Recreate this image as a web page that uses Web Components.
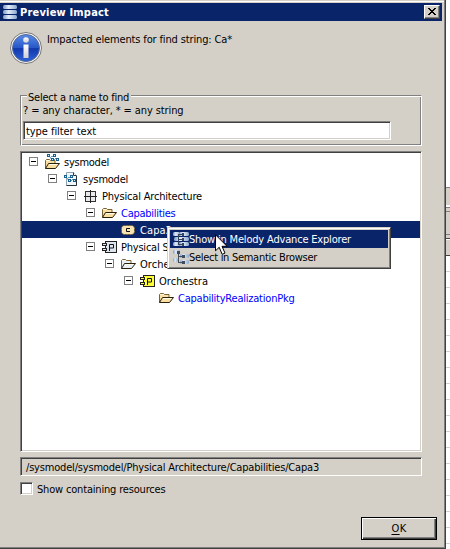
<!DOCTYPE html>
<html lang="en"><head><meta charset="utf-8"><title>Preview Impact</title>
<style>
html,body{margin:0;width:450px;height:549px;overflow:hidden;background:#fff}
body{font:11px/16px "DejaVu Sans Condensed","DejaVu Sans","Noto Sans",sans-serif;color:#000}
</style></head><body>
<preview-window></preview-window>
<script>
const define=(name,html,init)=>customElements.define(name,class extends HTMLElement{
  connectedCallback(){
    if(this.shadowRoot)return;
    const t=document.createElement('template');
    t.innerHTML=typeof html==='function'?html(this):html;
    this.attachShadow({mode:'open'}).append(t.content.cloneNode(true));
    if(init)init(this);
  }
});

const folder=fill=>`<path d="M1.500 12.500V4.500l1-1h3l1 1h4.500v3" fill="${fill}" stroke="#7b6230"/><path d="M1.500 12.500L4.500 7.500h11L11.500 12.500z" fill="${fill}" stroke="#2a1f08"/><path d="M2.500 4.500h3M5 8.500h8" stroke="#fffbe8"/>`;
const nodes=`<path d="M5 3l2 3M6 2.500h3M9 6l2-2" stroke="#5f97bb"/><g fill="#d3eefb" stroke="#17608f"><rect x="2.500" y=".5" width="2" height="2"/><rect x="8.500" y=".5" width="2" height="2"/><rect x="6.500" y="4.500" width="2" height="2"/><rect x="11.500" y="4.500" width="2" height="2"/></g>`;
const part=fill=>`<rect x="4.500" y="2.500" width="11" height="11" fill="${fill}" stroke="#222"/><path d="M8.500 12V5.500h4v3.500h-4" fill="none" stroke="#111"/><g fill="${fill}" stroke="#222"><rect x="1.500" y="4.500" width="4" height="2"/><rect x="1.500" y="9.500" width="4" height="2"/></g>`;
const bar=(x,y,w)=>`<rect x="${x}" y="${y}" width="${w}" height="4" rx="1.500" fill="url(#g)"/>`;
const grad=`<defs><linearGradient id="g"><stop stop-color="#7d9ac6"/><stop offset=".4" stop-color="#e4edf8"/><stop offset="1" stop-color="#8ba7cf"/></linearGradient></defs>`;
const icons={
  project:`<g transform="translate(0 2)">${folder('#f7dfa0')}</g><g transform="translate(1 0)">${nodes}</g>`,
  file:`<path d="M3.500 1.500h7l3 3v10h-10z" fill="#f0f6fa" stroke="#8fa3b0"/><path d="M13.500 5v9.500h-10" fill="none" stroke="#26343e"/><path d="M10.500 1.500v3h3" fill="#fff" stroke="#26343e"/><g transform="translate(-1 4)">${nodes}</g>`,
  arch:`<rect x="3.500" y="3.500" width="10" height="10" fill="#e9e9ec" stroke="#333"/><path d="M8.500 2v13M2 8.500h13" stroke="#222"/>`,
  folder:folder('#f9e0a4'),
  pale:folder('#e9f0f6'),
  capability:`<rect x="1.500" y="3.500" width="13" height="9" rx="3" fill="#f8e4b0" stroke="#6b5526" stroke-dasharray="2 1"/><path d="M10 6.500H6.500v3H10" fill="none" stroke="#111"/>`,
  system:part('#dce4ed'),
  part:part('#ffff38'),
  app:grad+bar(1,1,14)+bar(1,6,14)+bar(1,11,14),
  explorer:grad+bar(0,1,7)+bar(6,1,10)+bar(1,6,15)+bar(0,11,7)+bar(6,11,10)+`<path d="M5.500 3v11M5 3.500h5M5 8.500h5M5 13.500h5" stroke="#34435b" fill="none"/><g fill="#314662"><rect x="9" y="2" width="2" height="3"/><rect x="9" y="7" width="2" height="3"/><rect x="9" y="12" width="2" height="3"/></g>`,
  browser:grad+bar(0,1,7)+bar(7,5,9)+bar(7,11,9)+bar(0,9,5)+`<path d="M5.500 3v10M5 7.500h5M5 13.500h5" stroke="#46505c" fill="none"/><g fill="#414c5a"><rect x="4" y="2" width="3" height="3"/><rect x="9" y="6" width="3" height="3"/><rect x="9" y="12" width="3" height="3"/></g>`
};
define('ui-icon',e=>`<style>:host{display:block;flex:none;width:16px;height:16px}svg{display:block}</style><svg width="16" height="16" viewBox="0 0 16 16">${icons[e.getAttribute('name')]}</svg>`);

/* A text run whose tracking is set so that it fills the width it is given. */
define('ui-label','<style>:host{display:block;flex:none;white-space:pre;height:14px}span{display:inline-block}</style><span><slot></slot></span>',e=>{
  const w=+e.getAttribute('w');if(!w)return;
  const s=e.shadowRoot.querySelector('span');
  s.style.letterSpacing=(w-s.getBoundingClientRect().width)/e.textContent.length+'px';
});

define('title-bar',`<style>:host{display:flex;height:18px;margin:3px 2px 0 0;background:#0a246a;color:#fff;font-weight:bold;align-items:center}
ui-icon{margin:0 2px 0 2px}.x{box-sizing:border-box;margin-left:auto;margin-right:2px;width:16px;height:14px;background:#d4d0c8;border:1px solid;border-color:#fff #404040 #404040 #fff;box-shadow:inset -1px -1px #808080}.x svg{display:block}</style>
<ui-icon name="app"></ui-icon><slot></slot><div class="x"><svg width="14" height="12" shape-rendering="crispEdges"><path d="M3 2h2v1h1v1h2V3h1V2h2v1h-1v1H9v1H8v1h1v1h1v1h1v1H9V8H8V7H6v1H5v1H3V8h1V7h1V6h1V5H5V4H4V3H3z"/></svg></div>`);

define('info-header',`<style>:host{display:flex;height:74px;box-sizing:border-box;padding:11px 0 0 10px}svg{flex:none;margin-right:5px}</style>
<svg width="32" height="32"><defs><linearGradient id="b" x2="0" y2="1"><stop stop-color="#5b8be6"/><stop offset=".5" stop-color="#2756c6"/><stop offset=".52" stop-color="#1238ad"/><stop offset="1" stop-color="#2c62d8"/></linearGradient><linearGradient id="i" x2="0" y2="1"><stop stop-color="#fff"/><stop offset="1" stop-color="#cfcfd2"/></linearGradient></defs><circle cx="16" cy="16" r="15.500" fill="#f4f4f2" stroke="#777"/><circle cx="16" cy="16" r="13.500" fill="url(#b)" stroke="#536a9a"/><circle cx="16" cy="8" r="2.800" fill="url(#i)"/><path d="M13.500 12.500h5V26h-5z" fill="url(#i)"/></svg><slot></slot>`);

define('filter-group',`<style>:host{display:block;box-sizing:border-box;position:relative;margin:0 22px 0 20px;width:402px;height:51px;border:1px solid #808080;border-right-color:#fff;border-bottom-color:#fff;box-shadow:inset 1px 1px #fff,inset -1px -1px #808080}
.legend{position:absolute;left:6px;top:-6px;padding:0 2px 0 1px;background:#d4d0c8}.hint{padding:7px 0 0 2px}
.input{box-sizing:border-box;width:368px;height:19px;margin:4px 0 0 2px;background:#fff;border:1px solid;border-color:#808080 #fff #fff #808080;box-shadow:inset 1px 1px #404040,inset -1px -1px #d4d0c8;padding:2px}</style>
<div class="legend"><slot name="legend"></slot></div><div class="hint"><slot name="hint"></slot></div><div class="input"><slot name="value"></slot></div>`);

define('tree-view',`<style>:host{display:block;box-sizing:border-box;width:402px;height:301px;margin:5px 0 0 20px;background:#fff;border:1px solid;border-color:#808080 #fff #fff #808080;box-shadow:inset 1px 1px #404040,inset -1px -1px #d4d0c8;padding:1px;overflow:hidden}</style><slot></slot>`);

define('tree-row',e=>`<style>:host{display:flex;align-items:center;box-sizing:border-box;height:17px;padding-left:${7+19*e.getAttribute('depth')}px}
:host([selected]){background:#0a246a;color:#fff}:host([blue]){color:#00f}
svg{flex:none;margin-right:6px}ui-icon{margin-right:4px}</style>
<svg width="9" height="9">${e.hasAttribute('leaf')?'':'<rect x=".5" y=".5" width="8" height="8" fill="#fff" stroke="#808080"/><path d="M2 4.500h5" stroke="#000"/>'}</svg><ui-icon name="${e.getAttribute('icon')}"></ui-icon><slot></slot>`);

define('status-field',`<style>:host{display:block;box-sizing:border-box;width:402px;height:19px;margin:5px 0 0 20px;border:1px solid;border-color:#808080 #fff #fff #808080;box-shadow:inset 1px 1px #404040;padding:2px 0 0 5px}</style><slot></slot>`);

define('check-box',`<style>:host{display:flex;margin:6px 0 0 20px;height:14px}i{box-sizing:border-box;width:13px;height:13px;margin-right:4px;background:#fff;border:1px solid;border-color:#808080 #fff #fff #808080;box-shadow:inset 1px 1px #404040,inset -1px -1px #d4d0c8}</style><i></i><slot></slot>`);

define('push-button',`<style>:host{display:flex;justify-content:center;align-items:center;box-sizing:border-box;width:76px;height:23px;margin:21px 0 0 361px;padding-bottom:2px;border:1px solid #000;box-shadow:inset 1px 1px #fff,inset -1px -1px #404040,inset -2px -2px #808080}</style><slot></slot>`);

define('context-menu',`<style>:host{position:absolute;left:167px;top:227px;box-sizing:border-box;width:224px;height:42px;background:#d4d0c8;border:1px solid;border-color:#d4d0c8 #404040 #404040 #d4d0c8;box-shadow:inset 1px 1px #fff,inset -1px -1px #808080;padding:2px}
svg{position:absolute;left:47px;top:6px}</style><slot></slot><svg width="14" height="22" viewBox="0 0 14 22"><path d="M.5.8v16l3.700-3.500 3 7 2.800-1.200-3-6.800h5z" fill="#fff" stroke="#000"/></svg>`);
define('menu-item',e=>`<style>:host{display:flex;align-items:center;height:18px;padding-left:3px}:host([active]){background:#0a246a;color:#fff}</style><ui-icon name="${e.getAttribute('icon')}"></ui-icon><slot></slot>`);

/* The slice of the window behind the dialog. */
define('back-window',()=>`<style>:host{display:block;flex:1;overflow:hidden}div{box-sizing:border-box}.a{margin-top:187px;height:18px;background:#d4d0c8;border-top:1px solid #808080}.b{height:1px;margin-top:2px;background:#808080}.c{height:3px;background:#d4d0c8}.d{height:23px;background:#d4d0c8;border-top:1px solid #808080}.e{height:5px;background:#d4d0c8;border-top:1px solid #808080;border-bottom:1px solid #404040}.f{height:16px;background:#d4d0c8;border-bottom:1px solid #404040;margin-top:1px}.r{height:16px;border-bottom:1px solid #d4d0c8}</style><div class="a"></div><div class="b"></div><div class="c"></div><div class="d"></div><div class="e"></div><div class="f"></div>${'<div class="r"></div>'.repeat(18)}`);

define('preview-window',`<style>:host{display:flex;width:450px;height:549px;position:relative}
main{box-sizing:border-box;flex:none;width:446px;height:549px;background:#d4d0c8;border-right:1px solid #404040;border-bottom:1px solid #404040;box-shadow:inset -1px -1px #808080,inset 0 1px #d4d0c8,inset 0 2px #fff;display:flex;flex-direction:column;padding-right:1px}u{text-underline-offset:2px}</style>
<main>
<title-bar><ui-label w="89">Preview Impact</ui-label></title-bar>
<info-header><ui-label w="185">Impacted elements for find string: Ca*</ui-label></info-header>
<filter-group><ui-label slot="legend" w="101">Select a name to find</ui-label><ui-label slot="hint" w="160.500">? = any character, * = any string</ui-label><ui-label slot="value" w="70">type filter text</ui-label></filter-group>
<tree-view>
<tree-row depth="0" icon="project"><ui-label w="45">sysmodel</ui-label></tree-row>
<tree-row depth="1" icon="file"><ui-label w="45">sysmodel</ui-label></tree-row>
<tree-row depth="2" icon="arch"><ui-label w="100">Physical Architecture</ui-label></tree-row>
<tree-row depth="3" icon="folder" blue><ui-label w="54.500">Capabilities</ui-label></tree-row>
<tree-row depth="4" icon="capability" selected leaf><ui-label w="32">Capa3</ui-label></tree-row>
<tree-row depth="3" icon="system"><ui-label w="77">Physical System</ui-label></tree-row>
<tree-row depth="4" icon="pale"><ui-label w="49">Orchestra</ui-label></tree-row>
<tree-row depth="5" icon="part"><ui-label w="49">Orchestra</ui-label></tree-row>
<tree-row depth="6" icon="folder" blue leaf><ui-label w="116.500">CapabilityRealizationPkg</ui-label></tree-row>
</tree-view>
<status-field><ui-label w="293">/sysmodel/sysmodel/Physical Architecture/Capabilities/Capa3</ui-label></status-field>
<check-box><ui-label w="128.500">Show containing resources</ui-label></check-box>
<push-button><ui-label w="15"><u>O</u>K</ui-label></push-button>
</main>
<back-window></back-window>
<context-menu><menu-item icon="explorer" active><ui-label w="162">Show in Melody Advance Explorer</ui-label></menu-item><menu-item icon="browser"><ui-label w="128">Select in Semantic Browser</ui-label></menu-item></context-menu>`);
</script></body></html>
